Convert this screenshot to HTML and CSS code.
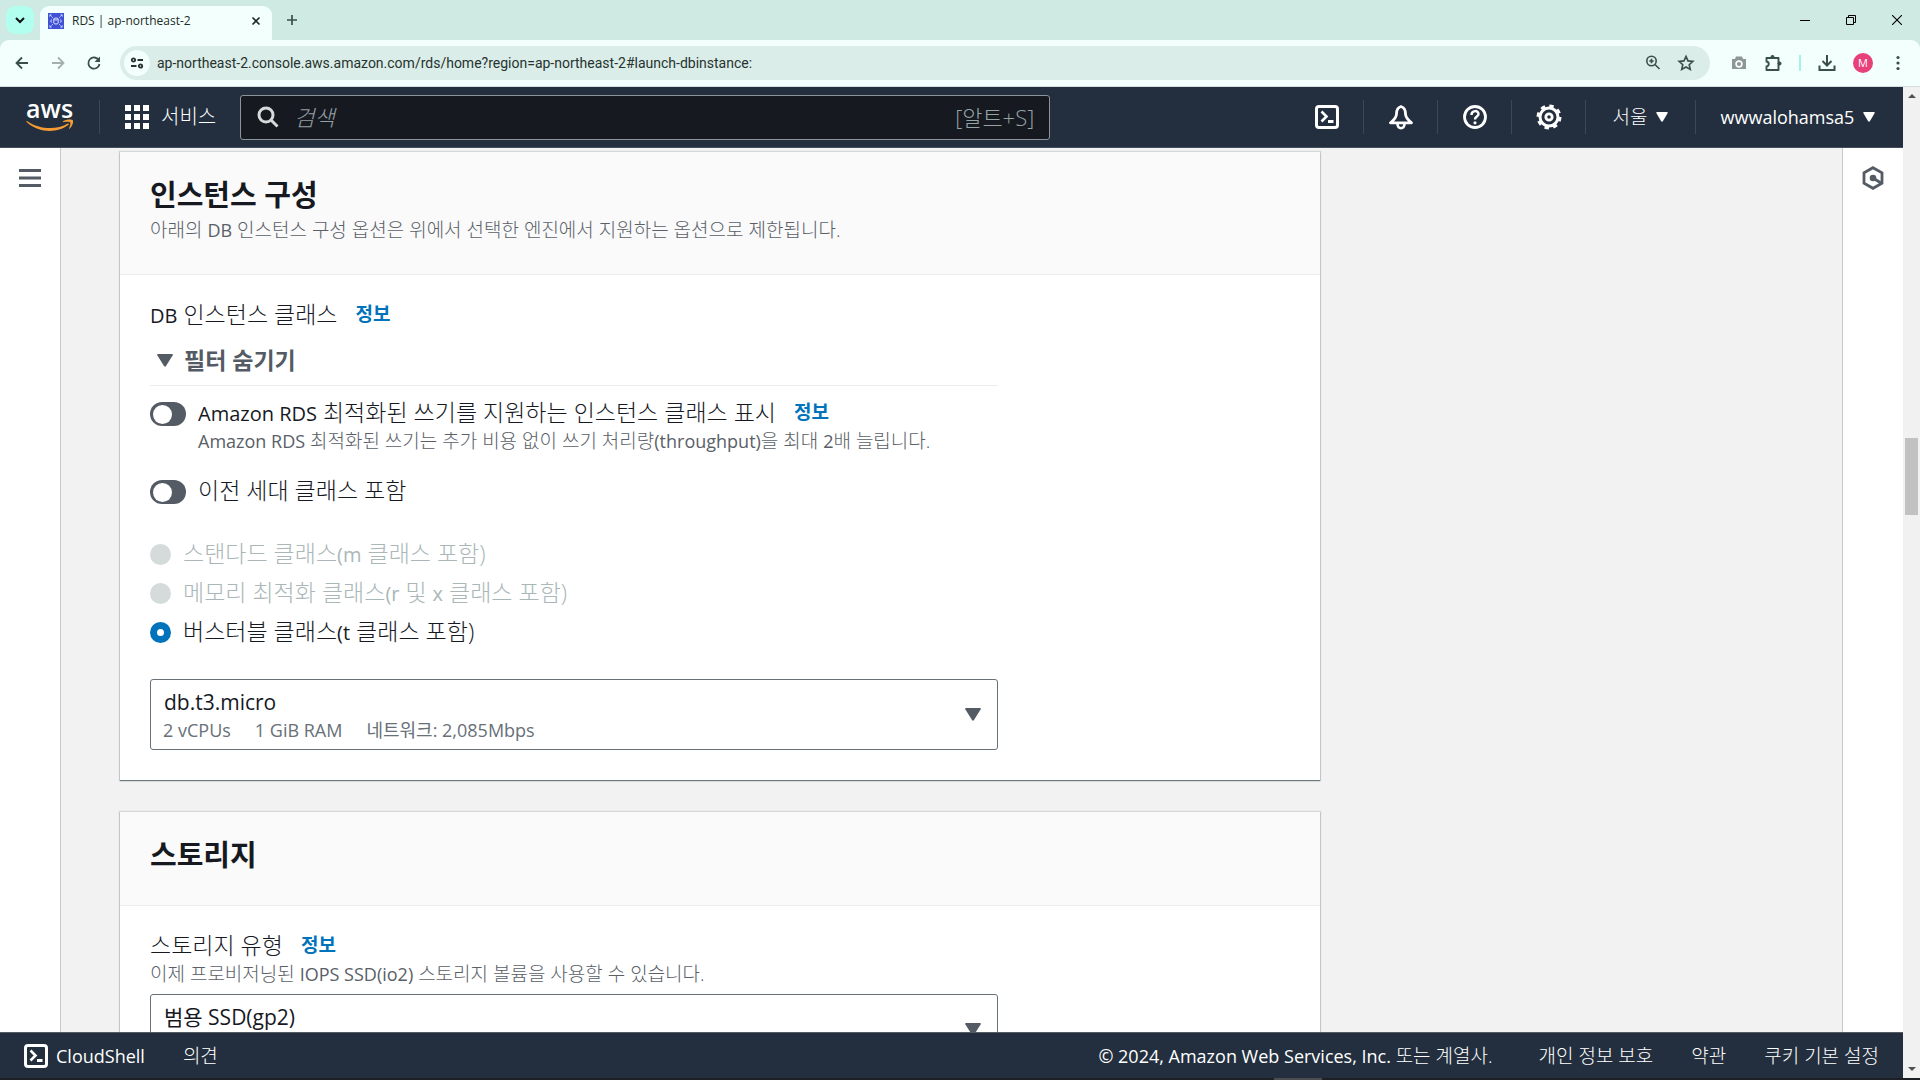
FILE: index.html
```html
<!DOCTYPE html>
<html lang="ko">
<head>
<meta charset="utf-8">
<meta name="viewport" content="width=device-width, initial-scale=1">
<title>RDS | ap-northeast-2</title>
<link rel="stylesheet" href="styles.css">
</head>
<body>
<div class="tabstrip">
  <button class="tab-search" type="button" aria-label="탭 검색"><svg width="10" height="10" viewBox="0 0 10 10"><path d="M1 3l4 4 4-4" fill="none" stroke="#111" stroke-width="2"/></svg></button>
  <div class="tab">
    <svg class="favicon" width="16" height="16" viewBox="0 0 16 16"><rect width="16" height="16" fill="#3f52d6"/><g fill="#dfe4ff"><path d="M1.500 1.500h2.500l-2.500 2.500zM14.500 1.500v2.500l-2.500-2.500zM1.500 14.500v-2.500l2.500 2.500zM14.500 14.500h-2.500l2.500-2.500z"/></g><g fill="none" stroke="#dfe4ff" stroke-width="1"><path d="M2.500 2.500l2.500 2.500M13.500 2.500l-2.500 2.500M2.500 13.500l2.500-2.500M13.500 13.500l-2.500-2.500" stroke-dasharray="1.500 1"/><ellipse cx="8" cy="6" rx="2.200" ry="1"/><path d="M5.800 6v4c0 1.400 4.400 1.400 4.400 0V6M3.500 6.500q-1.500 1.500 0 3M12.500 6.500q1.500 1.500 0 3"/></g></svg>
    <span class="tab-title">RDS | ap-northeast-2</span>
    <button class="plain" type="button" aria-label="탭 닫기"><svg width="10" height="10" viewBox="0 0 10 10"><path d="M1.500 1.500l7 7M8.500 1.500l-7 7" stroke="#1f2a26" stroke-width="1.600"/></svg></button>
  </div>
  <button class="plain new-tab" type="button" aria-label="새 탭"><svg width="12" height="12" viewBox="0 0 12 12"><path d="M6 1v10M1 6h10" stroke="#3b4f49" stroke-width="1.700"/></svg></button>
  <div class="window-buttons">
    <button class="plain" type="button" aria-label="최소화"><svg width="10" height="10" viewBox="0 0 10 10"><path d="M0 5.500h10" stroke="#000"/></svg></button>
    <button class="plain" type="button" aria-label="이전 크기로"><svg width="10" height="10" viewBox="0 0 10 10"><path d="M.5 2.500h7v7h-7zM2.500 2.500v-2h7v7h-2" fill="none" stroke="#000"/></svg></button>
    <button class="plain" type="button" aria-label="닫기"><svg width="10" height="10" viewBox="0 0 10 10"><path d="M0 0l10 10M10 0L0 10" stroke="#000" stroke-width="1.100"/></svg></button>
  </div>
</div>
<div class="toolbar">
  <div class="nav-buttons">
    <button class="plain" type="button" aria-label="뒤로"><svg width="16" height="16" viewBox="0 0 16 16"><path d="M14 8H3M8 2.500L2.500 8 8 13.500" fill="none" stroke="#3b4f49" stroke-width="1.800"/></svg></button>
    <button class="plain" type="button" aria-label="앞으로"><svg width="16" height="16" viewBox="0 0 16 16"><path d="M2 8h11M8 2.500L13.500 8 8 13.500" fill="none" stroke="#a3b1ac" stroke-width="1.800"/></svg></button>
    <button class="plain" type="button" aria-label="새로고침"><svg width="16" height="16" viewBox="0 0 16 16"><path d="M12.800 5.200A5.600 5.600 0 1 0 13.500 9" fill="none" stroke="#3b4f49" stroke-width="1.800"/><path d="M14 1.500V7H8.500z" fill="#3b4f49"/></svg></button>
  </div>
  <div class="omnibox">
    <button class="site-info" type="button" aria-label="사이트 정보"><svg width="14" height="14" viewBox="0 0 14 14"><g fill="none" stroke="#26332f" stroke-width="1.800"><circle cx="3.500" cy="4" r="1.700"/><path d="M7.500 4H13M1 10h5.500"/><circle cx="10.500" cy="10" r="1.700"/></g></svg></button>
    <input class="url" type="text" aria-label="주소" value="ap-northeast-2.console.aws.amazon.com/rds/home?region=ap-northeast-2#launch-dbinstance:">
    <button class="plain" type="button" aria-label="확대/축소"><svg width="16" height="16" viewBox="0 0 16 16"><g fill="none" stroke="#3b4f49" stroke-width="1.600"><circle cx="6.500" cy="6" r="4.700"/><path d="M10 9.500l4.500 4.500M6.500 3.800v4.400M4.300 6h4.400"/></g></svg></button>
    <button class="plain" type="button" aria-label="북마크"><svg width="18" height="18" viewBox="0 0 18 18"><path d="M9 2.400l2 4.500 4.900.5-3.700 3.300 1.100 4.800L9 13l-4.300 2.500 1.100-4.800-3.700-3.300 4.900-.5z" fill="none" stroke="#3b4f49" stroke-width="1.600"/></svg></button>
  </div>
  <div class="extensions">
    <button class="plain" type="button" aria-label="캡처"><svg width="16" height="16" viewBox="0 0 16 16"><path d="M1 4h3l1-2.500h6L12 4h3v10H1z" fill="#8d9793"/><circle cx="8" cy="9" r="2.900" fill="none" stroke="#fff" stroke-width="1.600"/></svg></button>
    <button class="plain" type="button" aria-label="확장 프로그램"><svg width="18" height="18" viewBox="0 0 18 18"><path d="M2.500 4h12v12h-12v-3.500c3-.5 3-4.500 0-5z" fill="none" stroke="#3b4f49" stroke-width="1.900" stroke-linejoin="round"/><circle cx="8.500" cy="3" r="2" fill="#3b4f49"/><circle cx="15.500" cy="9.500" r="2" fill="#3b4f49"/></svg></button>
    <span class="toolbar-rule"></span>
    <button class="plain" type="button" aria-label="다운로드"><svg width="18" height="18" viewBox="0 0 18 18"><path d="M9 1v10M4.500 7L9 11.500 13.500 7M1.500 11.500V16h15v-4.500" fill="none" stroke="#3b4f49" stroke-width="2"/></svg></button>
    <button class="avatar" type="button" aria-label="프로필">M</button>
    <button class="plain" type="button" aria-label="메뉴"><svg width="16" height="16" viewBox="0 0 16 16"><g fill="#3b4f49"><circle cx="8" cy="2.500" r="1.600"/><circle cx="8" cy="8" r="1.600"/><circle cx="8" cy="13.500" r="1.600"/></g></svg></button>
  </div>
</div>
<div class="viewport">
  <div class="console">
    <header class="topnav">
      <a class="logo" href="#" aria-label="aws"><span>aws</span><svg width="48" height="13" viewBox="0 0 48 13"><path d="M1 2c13 9 30 9 41 2.500.8-.3 1.300.4.700 1C32 14.500 13 14.500.600 3 .2 2.300.5 1.700 1 2z" fill="#f79c34"/><path d="M37 2.200c3-2 9.500-2 10-.7.600 2-.8 6-3.400 8.200-.4.300-.8 0-.6-.4.800-2 1.900-5 1.200-5.900-.9-1-4.200-.6-6.600-.4-.7 0-1-.4-.6-.8z" fill="#f79c34"/></svg></a>
      <button class="services" type="button"><svg width="24" height="24" viewBox="0 0 24 24" fill="#fff"><path d="M0 0h6v6H0zM9 0h6v6H9zM18 0h6v6h-6zM0 9h6v6H0zM9 9h6v6H9zM18 9h6v6h-6zM0 18h6v6H0zM9 18h6v6H9zM18 18h6v6h-6z"/></svg><span>서비스</span></button>
      <div class="search">
        <svg width="22" height="22" viewBox="0 0 22 22"><g fill="none" stroke="#d5dbdb" stroke-width="3"><circle cx="9" cy="9" r="7"/><path d="M14 14l6.500 6.500"/></g></svg>
        <input type="search" aria-label="검색" placeholder="검색">
        <span class="shortcut">[알트+S]</span>
      </div>
      <nav class="tools">
        <button type="button" aria-label="CloudShell"><svg width="24" height="24" viewBox="0 0 24 24"><g fill="none" stroke="#fff" stroke-width="3"><rect x="1.500" y="1.500" width="21" height="21" rx="2.500"/><path d="M6.500 6.500l5 5-5 5" stroke-width="2.600"/><path d="M13 16.500h5.500"/></g></svg></button>
        <button type="button" aria-label="알림"><svg width="24" height="26" viewBox="0 0 24 26"><path d="M12 2.500c-3.500 1-4.500 4-4.500 7.500 0 3-1.500 5-6 8.800h21C18 15 16.500 13 16.500 10c0-3.500-1-6.500-4.500-7.500z" fill="none" stroke="#fff" stroke-width="2.800" stroke-linejoin="round"/><path d="M8.500 20c.3 5.500 6.700 5.500 7 0" fill="none" stroke="#fff" stroke-width="2.600"/></svg></button>
        <button type="button" aria-label="도움말"><svg width="24" height="24" viewBox="0 0 24 24"><circle cx="12" cy="12" r="10.500" fill="none" stroke="#fff" stroke-width="2.800"/><path d="M8.500 10c0-5 7-5 7-1 0 2.700-3.500 2.500-3.500 5.500" fill="none" stroke="#fff" stroke-width="2.500"/><circle cx="12" cy="17.800" r="1.600" fill="#fff"/></svg></button>
        <button type="button" aria-label="설정"><svg width="26" height="26" viewBox="0 0 26 26"><circle cx="13" cy="13" r="9" fill="none" stroke="#fff" stroke-width="3"/><circle cx="13" cy="13" r="11" fill="none" stroke="#fff" stroke-width="3" stroke-dasharray="4.320 4.320"/><circle cx="13" cy="13" r="3.200" fill="none" stroke="#fff" stroke-width="2.800"/></svg></button>
        <button class="menu" type="button"><span class="ko">서울</span><svg width="12" height="10" viewBox="0 0 12 10"><path d="M1 0h10q1 0 .700 1L7 9q-1 1.500-2 0L.3 1Q0 0 1 0z" fill="#fff"/></svg></button>
        <button class="menu account" type="button"><span>wwwalohamsa5</span><svg width="12" height="10" viewBox="0 0 12 10"><path d="M1 0h10q1 0 .700 1L7 9q-1 1.500-2 0L.3 1Q0 0 1 0z" fill="#fff"/></svg></button>
      </nav>
    </header>
    <div class="workspace">
      <aside class="rail left"><button class="plain" type="button" aria-label="탐색 열기"><svg width="22" height="24" viewBox="0 0 22 24"><path d="M0 4.500h22M0 12h22M0 19.500h22" stroke="#545b64" stroke-width="3"/></svg></button></aside>
      <main class="content">
        <div class="cards">
          <section class="card">
            <div class="card-head"><h2>인스턴스 구성</h2><p class="hint">아래의 <span class="en">DB</span> 인스턴스 구성 옵션은 위에서 선택한 엔진에서 지원하는 옵션으로 제한됩니다.</p></div>
            <div class="card-body">
              <div class="field-label"><span><span class="en">DB</span> 인스턴스 클래스</span><a class="info" href="#">정보</a></div>
              <button class="filter" type="button" aria-expanded="true"><svg width="16" height="13" viewBox="0 0 16 13"><path d="M1 0h14q1.300 0 .700 1.200L9 12q-1 1.500-2 0L.3 1.200Q-.3 0 1 0z" fill="#545b64"/></svg>필터 숨기기</button>
              <div class="toggle-row">
                <input class="toggle" type="checkbox" role="switch" id="optimized">
                <div><div class="field-label"><label for="optimized"><span class="en">Amazon RDS</span> 최적화된 쓰기를 지원하는 인스턴스 클래스 표시</label><a class="info" href="#">정보</a></div>
                <p class="hint"><span class="en">Amazon RDS</span> 최적화된 쓰기는 추가 비용 없이 쓰기 처리량<span class="en">(throughput)</span>을 최대 <span class="en">2</span>배 늘립니다.</p></div>
              </div>
              <div class="toggle-row">
                <input class="toggle" type="checkbox" role="switch" id="previous">
                <label for="previous">이전 세대 클래스 포함</label>
              </div>
              <div class="radios">
                <label class="off"><input type="radio" name="class" disabled><span>스탠다드 클래스<span class="en">(m</span> 클래스 포함)</span></label>
                <label class="off"><input type="radio" name="class" disabled><span>메모리 최적화 클래스<span class="en">(r</span> 및 <span class="en">x</span> 클래스 포함)</span></label>
                <label><input type="radio" name="class" checked><span>버스터블 클래스<span class="en">(t</span> 클래스 포함)</span></label>
              </div>
              <div class="picker">
                <select aria-label="DB 인스턴스 클래스"><option>db.t3.micro</option></select>
                <div class="specs"><span>2 vCPUs</span><span>1 GiB RAM</span><span>네트워크: 2,085Mbps</span></div>
                <svg width="16" height="13" viewBox="0 0 16 13"><path d="M1 0h14q1.300 0 .700 1.200L9 12q-1 1.500-2 0L.3 1.200Q-.3 0 1 0z" fill="#545b64"/></svg>
              </div>
            </div>
          </section>
          <section class="card">
            <div class="card-head"><h2>스토리지</h2></div>
            <div class="card-body">
              <div class="field-label"><label for="storage">스토리지 유형</label><a class="info" href="#">정보</a></div>
              <p class="hint">이제 프로비저닝된 <span class="en">IOPS SSD(io2)</span> 스토리지 볼륨을 사용할 수 있습니다.</p>
              <div class="picker">
                <select id="storage"><option>범용 SSD(gp2)</option></select>
                <svg width="16" height="13" viewBox="0 0 16 13"><path d="M1 0h14q1.300 0 .700 1.200L9 12q-1 1.500-2 0L.3 1.200Q-.3 0 1 0z" fill="#545b64"/></svg>
              </div>
            </div>
          </section>
        </div>
      </main>
      <aside class="rail right"><button class="plain" type="button" aria-label="도움말 패널"><svg width="22" height="24" viewBox="0 0 22 24"><path d="M11 1.700l9 5v10.600l-9 5-9-5V6.700z" fill="none" stroke="#545b64" stroke-width="2.800"/><circle cx="11" cy="12" r="3.300" fill="#545b64"/><path d="M11 12l8 5" stroke="#545b64" stroke-width="2.800"/></svg></button></aside>
    </div>
    <footer class="footer">
      <button class="cloudshell" type="button"><svg width="24" height="24" viewBox="0 0 24 24"><g fill="none" stroke="#fff" stroke-width="3"><rect x="1.500" y="1.500" width="21" height="21" rx="2.500"/><path d="M6.500 6.500l5 5-5 5" stroke-width="2.600"/><path d="M13 16.500h5.500"/></g></svg>CloudShell</button>
      <a class="ko" href="#">의견</a>
      <span class="legal">© 2024, Amazon Web Services, Inc. <span class="ko">또는 계열사.</span></span>
      <a class="ko" href="#">개인 정보 보호</a>
      <a class="ko" href="#">약관</a>
      <a class="ko" href="#">쿠키 기본 설정</a>
    </footer>
  </div>
  <div class="scrollbar"><span class="up"></span><span class="track"><span class="thumb"></span></span><span class="down"></span></div>
</div>
<div class="taskbar-edge"><span></span></div>
</body>
</html>
```
FILE: styles.css
```css
* { box-sizing: border-box; }
body {
  margin: 0;
  height: 100vh;
  display: flex;
  flex-direction: column;
  overflow: hidden;
  background: #cfe9e3;
  color: #16191f;
  font-family: "Open Sans", "Noto Sans CJK KR", sans-serif;
  font-size: 23px;
  line-height: 30px;
}
button, input, select { font: inherit; color: inherit; }
button { border: 0; padding: 0; background: none; display: flex; align-items: center; white-space: nowrap; }
a { color: inherit; text-decoration: none; }
p, h2 { margin: 0; }
svg { display: block; flex: none; }
.plain { justify-content: center; }

/* browser chrome */
.tabstrip { flex: none; height: 40px; display: flex; align-items: flex-start; padding: 6px 18px 0 6px; }
.tab-search { width: 28px; height: 28px; justify-content: center; border-radius: 9px; background: #b2fff0; }
.tab { margin-left: 6px; width: 232px; height: 34px; display: flex; align-items: center; padding: 0 11px 4px 8px; border-radius: 9px 9px 0 0; background: #f2fffc; font-size: 12px; line-height: 16px; color: #1f2a26; }
.tab-title { flex: 1; margin-left: 8px; }
.new-tab { width: 28px; height: 28px; margin-left: 6px; }
.window-buttons { margin-left: auto; height: 28px; display: flex; gap: 36px; }
.toolbar { flex: none; height: 47px; display: flex; align-items: center; padding: 0 14px 0 14px; background: #f2fffc; border-bottom: 1px solid #d5dcda; border-radius: 9px 9px 0 0; }
.nav-buttons { display: flex; gap: 20px; }
.omnibox { flex: 1; height: 34px; margin-left: 18px; display: flex; align-items: center; gap: 16px; padding: 0 15px 0 4px; border-radius: 17px; background: #dbede8; }
.site-info { width: 26px; height: 26px; justify-content: center; border-radius: 13px; background: #f2fffc; }
.url { flex: 1; min-width: 0; margin-left: -9px; padding: 0; border: 0; background: none; font-family: Roboto, sans-serif; font-size: 14px; line-height: 20px; color: #26332f; }
.extensions { margin-left: 21px; display: flex; align-items: center; gap: 17px; }
.toolbar-rule { width: 2px; height: 16px; background: #a5f3e6; }
.avatar { width: 20px; height: 20px; justify-content: center; border-radius: 10px; background: #e8407a; color: #fff; font-size: 11px; line-height: 20px; }

.viewport { flex: 1; min-height: 0; display: flex; }
.console { flex: 1; min-width: 0; display: flex; flex-direction: column; background: #f2f2f2; }

/* top navigation */
.topnav { flex: none; height: 61px; display: flex; align-items: center; background: #232f3e; border-bottom: 1px solid #454f5b; color: #fff; font-size: 18px; line-height: 24px; }
.logo { width: 100px; height: 34px; padding-left: 26px; border-right: 1px solid #3d4855; display: flex; flex-direction: column; }
.logo span { font-size: 25px; font-weight: 600; line-height: 16px; height: 19px; }
.services { margin-left: 25px; gap: 12px; font-size: 20px; font-weight: 300; }
.search { flex: 0 1 810px; height: 45px; margin-left: 24px; display: flex; align-items: center; padding: 0 15px 0 16px; border: 1px solid #8d9499; border-radius: 3px; background: #161920; }
.search input { flex: 1; min-width: 0; margin-left: 15px; padding: 0; border: 0; background: none; font-size: 22px; font-weight: 300; }
.search input::placeholder { color: #95a0a5; font-style: italic; opacity: 1; }
.shortcut { font-size: 22px; font-weight: 300; color: #95a5a6; }
.tools { margin-left: auto; display: flex; align-items: center; }
.tools button { width: 74px; height: 34px; justify-content: center; border-right: 1px solid #3d4855; }
.tools .menu { width: 110px; gap: 9px; }
.tools .account { width: 207px; padding-right: 3px; border: 0; }
.ko { font-size: 19px; font-weight: 300; }

/* page */
.workspace { flex: 1; min-height: 0; display: flex; }
.rail { flex: none; width: 61px; display: flex; flex-direction: column; align-items: center; padding-top: 18px; background: #fff; }
.left { border-right: 1px solid #c5c9cc; }
.right { border-left: 1px solid #c5c9cc; }
.content { flex: 1; min-width: 0; overflow: hidden; padding: 4px 60px 0 59px; display: grid; grid-template-columns: 13fr 5fr; }
.cards { display: flex; flex-direction: column; gap: 32px; }
.card { background: #fff; box-shadow: 0 0 1px 1px rgba(0, 28, 36, .12), 0 1px 1px 0 rgba(0, 28, 36, .5); }
.card-head { padding: 25px 30px 32px; background: #fafafa; border-bottom: 1px solid #eaeded; }
.card-head .hint { margin-top: 5px; line-height: 24px; }
h2 { font-size: 29px; line-height: 36px; font-weight: 700; }
.hint { font-size: 19px; line-height: 28px; color: #596068; font-weight: 300; }
.card-body { padding: 24px 30px 30px; font-weight: 300; }
.en { font-size: 20px; line-height: 20px; font-weight: 400; }
.hint .en { font-size: 18px; }
.field-label { display: flex; align-items: center; gap: 18px; }
.info { font-size: 19px; font-weight: 700; color: #0073bb; }
.filter { width: 100%; max-width: 848px; margin: 16px 0 11px; padding: 0 0 10px 7px; gap: 11px; border-bottom: 1px solid #eaeded; font-weight: 700; color: #545b64; }
.toggle-row { display: flex; align-items: flex-start; gap: 12px; margin-bottom: 20px; }
.toggle { appearance: none; flex: none; width: 36px; height: 24px; margin: 5px 0 0; border-radius: 12px; background: #545b64; display: flex; align-items: center; padding-left: 3px; }
.toggle::before { content: ""; width: 19px; height: 19px; border-radius: 10px; background: #fff; }
.radios { margin: 33px 0; display: flex; flex-direction: column; gap: 9px; }
.radios label { display: flex; align-items: center; gap: 12px; }
.radios input { appearance: none; width: 21px; height: 21px; margin: 3px 0 0; border-radius: 11px; background: #fff; border: 7px solid #0073bb; }
.radios .off { color: #aab7b8; }
.radios .off input { border-color: #d5dbdb; background: #d5dbdb; }
.picker { width: 100%; max-width: 848px; display: grid; align-items: center; }
.picker > * { grid-area: 1 / 1; }
.picker select { appearance: none; width: 100%; height: 71px; padding: 0 48px 26px 13px; border: 1px solid #687078; border-radius: 3px; background: #fff; font-size: 21px; font-weight: 400; }
.picker svg { justify-self: end; margin-right: 17px; pointer-events: none; }
.specs { align-self: end; display: flex; gap: 24px; padding: 0 0 6px 13px; font-size: 18px; line-height: 28px; color: #687078; font-weight: 400; pointer-events: none; }
.hint + .picker { margin-top: 6px; }

/* footer */
.footer { flex: none; height: 46px; display: flex; align-items: center; gap: 38px; padding: 0 24px; background: #232f3e; border-top: 1px solid #545b64; color: #fff; font-size: 18px; line-height: 24px; white-space: nowrap; }
.cloudshell { gap: 8px; }
.legal { margin-left: auto; margin-right: 8px; }

.scrollbar { flex: none; width: 17px; display: flex; flex-direction: column; align-items: center; padding: 7px 0; background: #f1f1f1; }
.up { border: 4px solid transparent; border-top-width: 0; border-bottom-color: #505050; }
.down { border: 4px solid transparent; border-bottom-width: 0; border-top-color: #505050; }
.track { flex: 1; width: 13px; display: flex; flex-direction: column; }
.track::before { content: ""; flex: 340; }
.track::after { content: ""; flex: 551; }
.thumb { flex: 77; background: #c1c1c1; }
.taskbar-edge { flex: none; height: 2px; display: flex; justify-content: flex-end; padding-right: 598px; background: #1c1f24; }
.taskbar-edge span { width: 48px; background: #4b4d50; }
```
